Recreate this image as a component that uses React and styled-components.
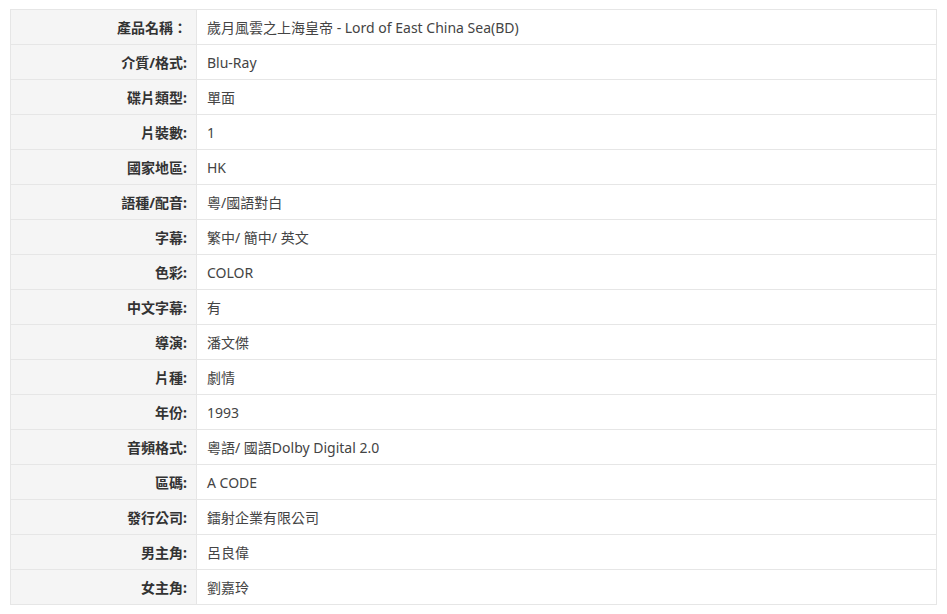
import React from 'react';
import styled, { createGlobalStyle } from 'styled-components';

const rows = [
  ['產品名稱：', '歲月風雲之上海皇帝 - Lord of East China Sea(BD)'],
  ['介質/格式:', 'Blu-Ray'],
  ['碟片類型:', '單面'],
  ['片裝數:', '1'],
  ['國家地區:', 'HK'],
  ['語種/配音:', '粵/國語對白'],
  ['字幕:', '繁中/ 簡中/ 英文'],
  ['色彩:', 'COLOR'],
  ['中文字幕:', '有'],
  ['導演:', '潘文傑'],
  ['片種:', '劇情'],
  ['年份:', '1993'],
  ['音頻格式:', '粵語/ 國語Dolby Digital 2.0'],
  ['區碼:', 'A CODE'],
  ['發行公司:', '鐳射企業有限公司'],
  ['男主角:', '呂良偉'],
  ['女主角:', '劉嘉玲'],
];

const GlobalStyle = createGlobalStyle`
  body {
    margin: 0;
    background: #fff;
    font-family: "Noto Sans", "Noto Sans CJK TC", sans-serif;
  }
`;

export default function App() {
  return (
    <>
      <GlobalStyle />
      <Page>
        <Table>
          <tbody>
            {rows.map(([label, value]) => (
              <tr key={label}>
                <Label>{label}</Label>
                <Value>{value}</Value>
              </tr>
            ))}
          </tbody>
        </Table>
      </Page>
    </>
  );
}

const Page = styled.div`
  padding: 9px 10px 10px 10px;
`;

const Table = styled.table`
  width: 927px;
  border-collapse: collapse;
  table-layout: fixed;
  font-size: 14px;
`;

const Label = styled.th`
  width: 176px;
  height: 34px;
  padding: 0 9px 0 0;
  text-align: right;
  font-weight: bold;
  color: #333;
  background: #f5f5f5;
  border: 1px solid #e6e6e6;
`;

const Value = styled.td`
  height: 34px;
  padding: 0 0 0 10px;
  text-align: left;
  color: #444;
  background: #fff;
  border: 1px solid #e6e6e6;
`;
